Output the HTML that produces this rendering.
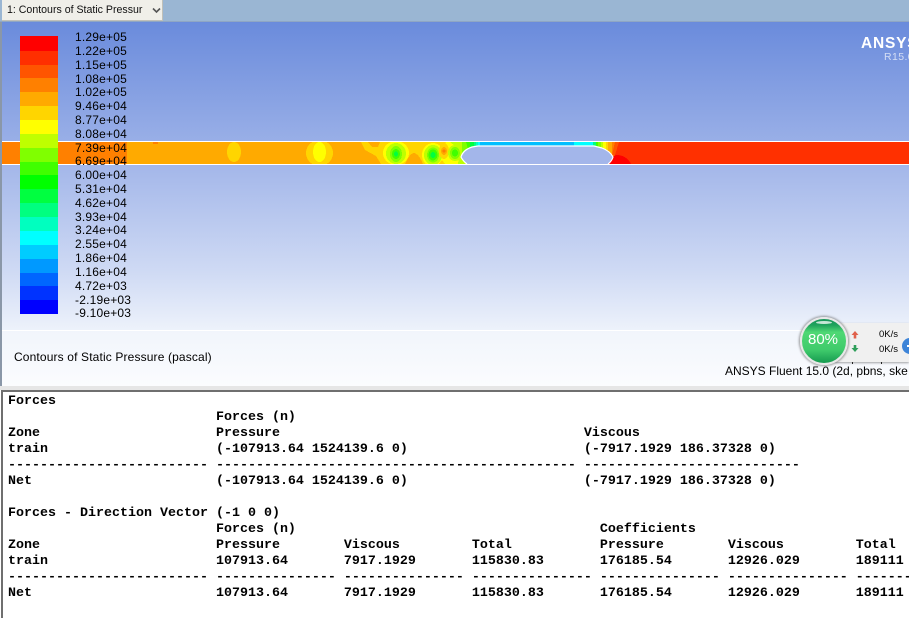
<!DOCTYPE html>
<html><head><meta charset="utf-8"><style>
html,body{margin:0;padding:0;width:909px;height:618px;overflow:hidden;background:#fff}
#r{position:relative;width:909px;height:618px;overflow:hidden;font-family:"Liberation Sans",sans-serif;color:#000}
.a{position:absolute}
.l{position:absolute;left:75px;font-size:12px;line-height:14px;letter-spacing:.2px;white-space:nowrap}
.b{position:absolute;left:20px;width:38px;height:14px}
pre{position:absolute;left:8px;top:394px;margin:0;font:bold 13.33px/16px "Liberation Mono",monospace;color:#000;white-space:pre}
</style></head><body><div id="r">
<div class="a" style="left:0;top:0;width:909px;height:21px;background:#9ab6d3"></div>
<div class="a" style="left:0;top:21px;width:909px;height:1px;background:#8fa6c4"></div>
<div class="a" style="left:2px;top:0;width:160px;height:20px;background:#f0efe9;border:solid #c0c0b8;border-width:0 1px 1px 0"></div>
<div class="a" style="left:7px;top:3px;font-size:10.6px;line-height:14px;color:#111;white-space:nowrap">1: Contours of Static Pressur</div>
<svg class="a" style="left:152px;top:7px" width="9" height="7"><path d="M1 1.5 4.5 5 8 1.5" fill="none" stroke="#555" stroke-width="1.6"/></svg>

<div class="a" style="left:2px;top:22px;width:907px;height:308px;background:linear-gradient(#6a8bdc 0,#9db2e8 130px,#a6b9ea 150px,#cfdaf4 250px,#edf2fb 308px)"></div>
<div class="a" style="left:0;top:22px;width:2px;height:368px;background:#8a97a8"></div>
<div class="a" style="left:2px;top:330px;width:907px;height:1px;background:#fff"></div>
<div class="a" style="left:2px;top:331px;width:907px;height:55px;background:linear-gradient(#f1f5fc,#fbfcfe)"></div>
<div class="a" style="left:0;top:386px;width:909px;height:4px;background:#e6e6e6"></div>

<div class="a" style="left:861px;top:35px;font-size:15.5px;font-weight:bold;line-height:18px;color:#fff;letter-spacing:.8px;white-space:nowrap">ANSYS</div>
<div class="a" style="left:884px;top:51px;font-size:10.5px;line-height:12px;color:#d5def5;letter-spacing:.4px;white-space:nowrap">R15.0</div>

<svg class="a" style="left:0;top:141px" width="909" height="24" viewBox="0 141 909 24" shape-rendering="crispEdges">
<rect x="2" y="141" width="907" height="24" fill="#ffaa00"/>
<rect x="2" y="142" width="125" height="22" fill="#ff8000"/>
<rect x="153" y="142" width="5" height="2" fill="#ff8000"/>
<ellipse cx="234" cy="152" rx="7" ry="10" fill="#ffd500"/>
<ellipse cx="319.5" cy="153" rx="13.5" ry="13" fill="#ffd500"/>
<ellipse cx="319.5" cy="152" rx="6.5" ry="10" fill="#ffff00"/>
<path d="M361 142H475V164H381L376 156 365 150z" fill="#ffd500"/>
<path d="M368 142H380L378 147H372z" fill="#ffaa00"/>
<path d="M405 164Q410 153 414 153 419 154 423 164z" fill="#ffaa00"/>
<ellipse cx="396" cy="153" rx="13" ry="12" fill="#ffff00"/>
<ellipse cx="396" cy="153.500" rx="10" ry="10.500" fill="#bfff00"/>
<ellipse cx="396" cy="154" rx="6" ry="8" fill="#80ff00"/>
<ellipse cx="396" cy="154" rx="4" ry="5" fill="#40ff00"/>
<ellipse cx="396" cy="154" rx="2" ry="2.500" fill="#00ff40"/>
<path d="M438 164L446 142H475V164z" fill="#ffff00"/>
<ellipse cx="433" cy="155" rx="11" ry="12" fill="#ffff00"/>
<ellipse cx="433" cy="155" rx="9" ry="10" fill="#bfff00"/>
<ellipse cx="433" cy="155" rx="6" ry="7.500" fill="#80ff00"/>
<ellipse cx="433" cy="155" rx="4.500" ry="5.500" fill="#40ff00"/>
<ellipse cx="433" cy="155" rx="2.500" ry="3" fill="#00ff40"/>
<ellipse cx="444" cy="151" rx="5" ry="8" fill="#ffd500"/>
<ellipse cx="444" cy="151" rx="3" ry="4" fill="#ffaa00"/>
<ellipse cx="444" cy="151" rx="1.500" ry="1.500" fill="#ff8000"/>
<path d="M439 164L442 160 445 164z" fill="#ffd500"/>
<path d="M450 142H475V164H458L460 150z" fill="#bfff00"/>
<ellipse cx="455" cy="153" rx="7" ry="8" fill="#bfff00"/>
<ellipse cx="455" cy="153" rx="5" ry="6" fill="#80ff00"/>
<ellipse cx="455" cy="153" rx="3" ry="3.500" fill="#40ff00"/>
<path d="M462 142H475V150L462 156z" fill="#80ff00"/>
<path d="M466 142H475V149H468z" fill="#40ff00"/>
<rect x="470" y="142" width="6" height="7" fill="#00ff40"/>
<rect x="474" y="142" width="3" height="6" fill="#00ff80"/>
<rect x="476" y="142" width="3" height="6" fill="#00ffbf"/>
<rect x="478" y="142" width="3" height="6" fill="#00ffff"/>
<rect x="480" y="142" width="95" height="6" fill="#00bfff"/>
<rect x="574" y="142" width="19" height="6" fill="#00ffff"/>
<rect x="593" y="142" width="3" height="7" fill="#00ff80"/>
<rect x="596" y="142" width="2" height="8" fill="#40ff00"/>
<rect x="598" y="142" width="3" height="9" fill="#80ff00"/>
<rect x="601" y="142" width="2" height="11" fill="#bfff00"/>
<rect x="603" y="142" width="3" height="12" fill="#ffff00"/>
<rect x="606" y="142" width="2" height="14" fill="#ffd500"/>
<rect x="608" y="142" width="4" height="22" fill="#ffaa00"/>
<rect x="612" y="142" width="3" height="22" fill="#ff8000"/>
<rect x="615" y="142" width="294" height="22" fill="#ff3000"/>
<path d="M615 142H619L615 155H612z" fill="#ff5500"/>
<path d="M607 164Q610 155 618 155 627 156 631 164z" fill="#ff0000"/>
<path d="M461 157q2-7 11-10l6-1h116l8 2q8 3 11 9-1 4-5 7H467q-4-3-6-7z" fill="#a3b6ea"/>
<path d="M467 164q-4-3-6-7 2-7 11-10l6-1h116l8 2q8 3 11 9-1 4-5 7" fill="none" stroke="#fff" stroke-width="1.2" shape-rendering="auto"/>
<rect x="0" y="141" width="909" height="1" fill="#fff"/>
<rect x="0" y="164" width="909" height="1" fill="#fff"/>
<rect x="0" y="141" width="2" height="24" fill="#8a97a8"/>
</svg>

<div class="b" style="top:36px;height:15px;background:#ff0000"></div>
<div class="b" style="top:51px;background:#ff2f00"></div>
<div class="b" style="top:65px;background:#ff5500"></div>
<div class="b" style="top:78px;background:#ff8000"></div>
<div class="b" style="top:92px;background:#ffaa00"></div>
<div class="b" style="top:106px;background:#ffd500"></div>
<div class="b" style="top:120px;background:#ffff00"></div>
<div class="b" style="top:134px;background:#bfff00"></div>
<div class="b" style="top:148px;background:#80ff00"></div>
<div class="b" style="top:162px;background:#40ff00"></div>
<div class="b" style="top:175px;background:#00ff00"></div>
<div class="b" style="top:189px;background:#00ff40"></div>
<div class="b" style="top:203px;background:#00ff80"></div>
<div class="b" style="top:217px;background:#00ffbf"></div>
<div class="b" style="top:231px;background:#00ffff"></div>
<div class="b" style="top:245px;background:#00ccff"></div>
<div class="b" style="top:259px;background:#0099ff"></div>
<div class="b" style="top:273px;background:#0066ff"></div>
<div class="b" style="top:286px;background:#0033ff"></div>
<div class="b" style="top:300px;background:#0000ff"></div>

<div class="l" style="top:30px">1.29e+05</div>
<div class="l" style="top:44px">1.22e+05</div>
<div class="l" style="top:58px">1.15e+05</div>
<div class="l" style="top:72px">1.08e+05</div>
<div class="l" style="top:85px">1.02e+05</div>
<div class="l" style="top:99px">9.46e+04</div>
<div class="l" style="top:113px">8.77e+04</div>
<div class="l" style="top:127px">8.08e+04</div>
<div class="l" style="top:141px">7.39e+04</div>
<div class="l" style="top:154px">6.69e+04</div>
<div class="l" style="top:168px">6.00e+04</div>
<div class="l" style="top:182px">5.31e+04</div>
<div class="l" style="top:196px">4.62e+04</div>
<div class="l" style="top:210px">3.93e+04</div>
<div class="l" style="top:223px">3.24e+04</div>
<div class="l" style="top:237px">2.55e+04</div>
<div class="l" style="top:251px">1.86e+04</div>
<div class="l" style="top:265px">1.16e+04</div>
<div class="l" style="top:279px">4.72e+03</div>
<div class="l" style="top:293px">-2.19e+03</div>
<div class="l" style="top:306px">-9.10e+03</div>

<div class="a" style="left:14px;top:350px;font-size:12px;letter-spacing:.14px;line-height:14px;white-space:nowrap">Contours of Static Pressure (pascal)</div>
<div class="a" style="left:725px;top:364px;font-size:12px;line-height:14px;white-space:nowrap">ANSYS Fluent 15.0 (2d, pbns, ske</div>

<div class="a" style="left:835px;top:323px;width:74px;height:39px;background:#f0f0f0;box-shadow:0 1px 2px rgba(0,0,0,.35)"></div>
<div class="a" style="left:852px;top:362px;width:1px;height:2px;background:#222"></div>
<div class="a" style="left:881px;top:362px;width:1px;height:2px;background:#222"></div>
<svg class="a" style="left:851px;top:330px" width="8" height="24"><path d="M4 1 7.500 5H5.300V8.500H2.700V5H.5z" fill="#e0604a"/><path d="M4 22 7.500 18H5.300V15H2.700V18H.5z" fill="#2e9e5a"/></svg>
<div class="a" style="left:879px;top:329px;font-size:9.5px;line-height:12px;white-space:nowrap">0K/s</div>
<div class="a" style="left:879px;top:344px;font-size:9.5px;line-height:12px;white-space:nowrap">0K/s</div>
<div class="a" style="left:902px;top:338px;width:16px;height:16px;border-radius:50%;background:#3d84d8"></div>
<div class="a" style="left:907px;top:345px;width:2px;height:2px;background:#fff"></div>
<div class="a" style="left:800px;top:317px;width:44px;height:44px;border-radius:50%;background:linear-gradient(#18955a 0,#1fa35c 14%,#4fd874 30%,#3fcb6b 70%,#169a50 100%);border:2px solid #e8e8e8;box-shadow:0 0 2px 1px rgba(90,90,90,.6)"></div>
<div class="a" style="left:816px;top:321px;width:16px;height:3px;border-radius:50%;background:rgba(255,255,255,.75)"></div>
<div class="a" style="left:798px;top:332px;width:50px;text-align:center;font-size:15px;line-height:16px;color:#fff">80%</div>

<div class="a" style="left:1px;top:390px;width:908px;height:228px;background:#fff;border-top:2px solid #6f6f6f;border-left:2px solid #6f6f6f;box-sizing:border-box"></div>
<pre>Forces
                          Forces (n)
Zone                      Pressure                                      Viscous
train                     (-107913.64 1524139.6 0)                      (-7917.1929 186.37328 0)
------------------------- --------------------------------------------- ---------------------------
Net                       (-107913.64 1524139.6 0)                      (-7917.1929 186.37328 0)

Forces - Direction Vector (-1 0 0)
                          Forces (n)                                      Coefficients
Zone                      Pressure        Viscous         Total           Pressure        Viscous         Total
train                     107913.64       7917.1929       115830.83       176185.54       12926.029       189111
------------------------- --------------- --------------- --------------- --------------- --------------- ---------------
Net                       107913.64       7917.1929       115830.83       176185.54       12926.029       189111</pre>
</div></body></html>
